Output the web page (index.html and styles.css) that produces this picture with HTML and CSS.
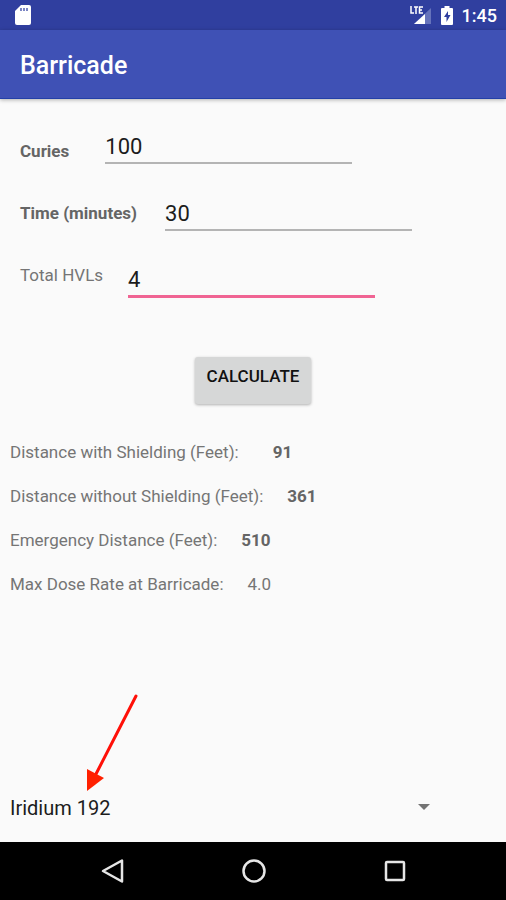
FILE: index.html
```html
<!DOCTYPE html>
<html lang="en">
<head>
  <meta charset="UTF-8">
  <meta name="viewport" content="width=device-width, initial-scale=1.0">
  <title>Barricade</title>
  <link rel="stylesheet" href="styles.css">
</head>
<body>
  <div class="status">
    <svg class="status__sd" width="16" height="20" viewBox="0 0 16 20" aria-hidden="true">
      <path d="M6 0h8q2 0 2 2v16q0 2-2 2H2q-2 0-2-2V6z" fill="#fff"/>
      <path d="M6 3v3M9 3v3M12 3v3" stroke="#7c86c4" stroke-width="2"/>
    </svg>
    <svg width="22" height="18" viewBox="0 0 22 18" aria-hidden="true">
      <path d="M21 2v16H4z" fill="#6673bb"/>
      <path d="M15 8v10H4z" fill="#fff"/>
      <path d="M1 0v7h3M4 1h4M6 1v7M13 1H9.500v6H13M9.500 4H12" fill="none" stroke="#fff" stroke-width="1.500"/>
    </svg>
    <svg width="12" height="19" viewBox="0 0 12 19" aria-hidden="true">
      <path d="M3.500 0h5v2H11q1 0 1 1v15q0 1-1 1H1q-1 0-1-1V3q0-1 1-1h2.500z" fill="#fff"/>
      <path d="M7 5L3 11h2.500v5L9.500 9H7z" fill="#303f9f"/>
    </svg>
    <span class="status__time">1:45</span>
  </div>
  <header class="appbar">
    <h1 class="appbar__title">Barricade</h1>
  </header>

  <main class="content">
    <form class="form">
      <div class="field field--low">
        <label class="field__label field__label--bold" for="curies">Curies</label>
        <input class="field__input" id="curies" type="text" inputmode="decimal" value="100">
      </div>
      <div class="field">
        <label class="field__label field__label--bold" for="time">Time (minutes)</label>
        <input class="field__input" id="time" type="text" inputmode="decimal" value="30">
      </div>
      <div class="field field--high">
        <label class="field__label" for="hvls">Total HVLs</label>
        <input class="field__input field__input--active" id="hvls" type="text" inputmode="decimal" value="4">
      </div>
      <button class="calculate" type="button">CALCULATE</button>
    </form>

    <dl class="results">
      <div class="result result--wide">
        <dt>Distance with Shielding (Feet):</dt>
        <dd class="result__bold">91</dd>
      </div>
      <div class="result">
        <dt>Distance without Shielding (Feet):</dt>
        <dd class="result__bold">361</dd>
      </div>
      <div class="result">
        <dt>Emergency Distance (Feet):</dt>
        <dd class="result__bold">510</dd>
      </div>
      <div class="result">
        <dt>Max Dose Rate at Barricade:</dt>
        <dd>4.0</dd>
      </div>
    </dl>

    <div class="spinner">
      <svg class="spinner__pointer" width="54" height="98" viewBox="0 0 54 98" aria-hidden="true">
        <path d="M51 2L11 80" stroke="#ff1008" stroke-width="3" stroke-linecap="round"/>
        <path d="M2 75l17 9L2 97z" fill="#ff2000"/>
      </svg>
      <select class="spinner__select" aria-label="Isotope">
        <option>Iridium 192</option>
      </select>
      <svg class="spinner__caret" width="12" height="6" viewBox="0 0 12 6" aria-hidden="true">
        <path d="M0 0h12L6 6z" fill="#737373"/>
      </svg>
    </div>
  </main>

  <nav class="navbar">
    <button class="navbar__btn" type="button" aria-label="Back">
      <svg width="26" height="26" viewBox="0 0 26 26">
        <path d="M22 2.500v21L3 13z" fill="none" stroke="#e6e6e6" stroke-width="2.500" stroke-linejoin="round"/>
      </svg>
    </button>
    <button class="navbar__btn" type="button" aria-label="Home">
      <svg width="26" height="26" viewBox="0 0 26 26">
        <circle cx="13" cy="13" r="10.500" fill="none" stroke="#e6e6e6" stroke-width="2.500"/>
      </svg>
    </button>
    <button class="navbar__btn" type="button" aria-label="Recent apps">
      <svg width="26" height="26" viewBox="0 0 26 26">
        <rect x="4" y="4" width="18" height="18" rx="1" fill="none" stroke="#e6e6e6" stroke-width="2.500"/>
      </svg>
    </button>
  </nav>
</body>
</html>
```
FILE: styles.css
```css
* { padding:0; margin:0; box-sizing:border-box; }

:root {
  --color-primary: #3f51b5;
  --color-primary-dark: #303f9f;
  --color-accent: #f06493;
  --color-background: #fafafa;
  --color-text: #1c1c1c;
  --color-text-light: #757575;
  --color-text-bold: #656565;
  --color-line: #b4b4b4;

  --font-size: 17px;
  --font-size-input: 22px;
}

body {
  min-height: 100vh;
  display: flex;
  flex-direction: column;
  background-color: var(--color-background);
  color: var(--color-text-light);
  font-family: Roboto, "Liberation Sans", sans-serif;
  font-size: var(--font-size);
}

button, input, select {
  font: inherit;
  border: none;
  outline: none;
  background: none;
}

.status {
  height: 30px;
  padding: 0 9px 0 15px;
  display: flex;
  align-items: center;
  gap: 9px;
  background-color: var(--color-primary-dark);
  color: #fff;
}

.status__sd {
  margin-right: auto;
}

.status__time {
  font-size: 18px;
  font-weight: 500;
}

.appbar {
  height: 69px;
  padding: 2px 20px 0;
  display: flex;
  align-items: center;
  background-color: var(--color-primary);
  border-bottom: 1px solid #2340a8;
  box-shadow: 0 1px 4px rgba(0, 0, 0, 0.3);
}

.appbar__title {
  color: #fff;
  font-size: 25px;
  font-weight: 500;
}

.content {
  flex: 1;
  display: flex;
  flex-direction: column;
  padding: 29px 10px 12px;
}

.form {
  display: flex;
  flex-direction: column;
  gap: 31px;
  padding: 0 10px;
}

.field {
  display: flex;
  align-items: center;
  gap: 28px;
}

.field--low {
  align-items: flex-end;
  gap: 36px;
}

.field--high {
  align-items: flex-start;
  gap: 25px;
}

.field__label {
  line-height: 26px;
}

.field__label--bold {
  color: var(--color-text-bold);
  font-weight: 700;
}

.field__input {
  width: 53%;
  height: 36px;
  padding-top: 2px;
  border-bottom: 2px solid var(--color-line);
  color: var(--color-text);
  font-size: var(--font-size-input);
}

.field__input--active {
  border-bottom: 3px solid var(--color-accent);
}

.calculate {
  align-self: center;
  width: 116px;
  height: 47px;
  margin-top: 28px;
  padding-bottom: 10px;
  border-radius: 3px;
  background-color: #d6d7d7;
  box-shadow: 0 1px 3px rgba(0, 0, 0, 0.3);
  color: #111;
  font-weight: 500;
}

.results {
  margin-top: 36px;
  display: flex;
  flex-direction: column;
  gap: 20px;
}

.result {
  display: flex;
  gap: 24px;
  line-height: 24px;
}

.result--wide {
  gap: 34px;
}

.result__bold {
  color: var(--color-text-bold);
  font-weight: 700;
}

.spinner {
  position: relative;
  width: 89%;
  margin-top: auto;
}

.spinner__select {
  appearance: none;
  display: block;
  width: 100%;
  height: 44px;
  color: var(--color-text);
  font-size: 20px;
}

.spinner__caret {
  position: absolute;
  right: 13px;
  top: 18px;
  pointer-events: none;
}

/* arrow that points at the isotope drop-down */
.spinner__pointer {
  position: absolute;
  left: 75px;
  bottom: 38px;
  pointer-events: none;
}

.navbar {
  height: 58px;
  padding: 0 40px 0 42px;
  display: flex;
  align-items: center;
  background-color: #000;
}

.navbar__btn {
  flex: 1;
  height: 48px;
  display: flex;
  align-items: center;
  justify-content: center;
}
```
